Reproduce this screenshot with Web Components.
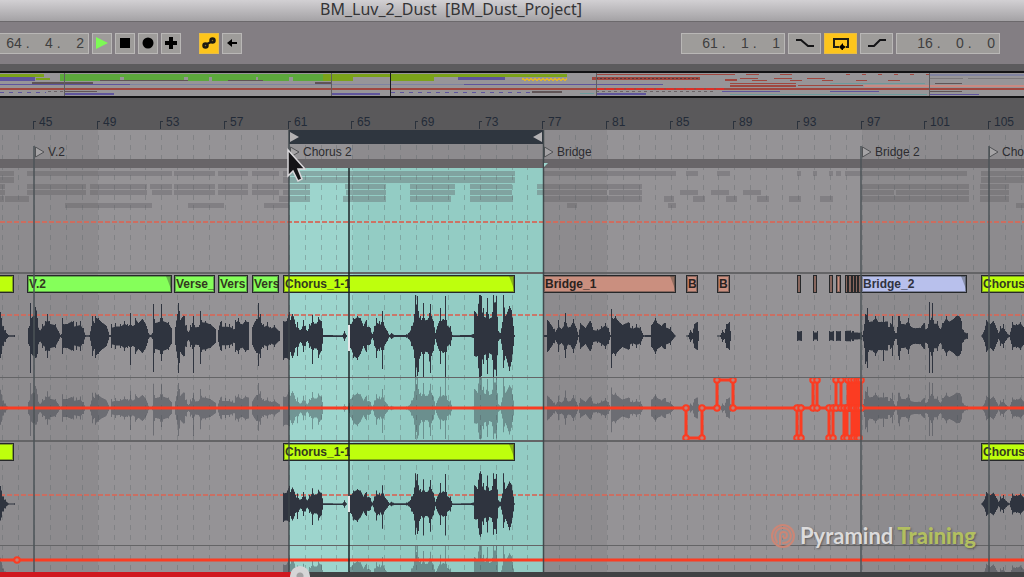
<!DOCTYPE html>
<html lang="en">
<head>
<meta charset="utf-8">
<title>BM_Luv_2_Dust</title>
<style>
  html, body {
    margin: 0;
    height: 100%;
    overflow: hidden;
    background: #5a595b;
  }
  body {
    font-family: "Liberation Sans", Arial, sans-serif;
    color: #2e3034;
  }
</style>
</head>
<body>
<daw-window>
  <title-bar slot="title">BM_Luv_2_Dust  [BM_Dust_Project]</title-bar>
  <transport-bar slot="transport"></transport-bar>
  <song-overview slot="overview"></song-overview>
  <bar-ruler slot="ruler"></bar-ruler>
  <arrange-view slot="arrange">
    <song-locator slot="locators" x="34">V.2</song-locator>
    <song-locator slot="locators" x="289">Chorus 2</song-locator>
    <song-locator slot="locators" x="543">Bridge</song-locator>
    <song-locator slot="locators" x="861">Bridge 2</song-locator>
    <song-locator slot="locators" x="988">Cho</song-locator>

    <midi-lane></midi-lane>
    <track-lane wave="full" level="22">
      <audio-clip x="-40" width="54" tone="lime"></audio-clip>
      <audio-clip x="27" width="145" tone="green">V.2</audio-clip>
      <audio-clip x="174" width="41" tone="green">Verse_</audio-clip>
      <audio-clip x="218" width="30" tone="green">Vers</audio-clip>
      <audio-clip x="252" width="27" tone="green">Vers</audio-clip>
      <audio-clip x="283" width="232" tone="lime" split="66">Chorus_1-1</audio-clip>
      <audio-clip x="543" width="133" tone="clay">Bridge_1</audio-clip>
      <audio-clip x="686" width="12" tone="clay">B</audio-clip>
      <audio-clip x="717" width="13" tone="clay">B</audio-clip>
      <audio-clip x="797" width="4" tone="clay"></audio-clip>
      <audio-clip x="813" width="4" tone="clay"></audio-clip>
      <audio-clip x="829" width="4" tone="clay"></audio-clip>
      <audio-clip x="836" width="5" tone="clay"></audio-clip>
      <audio-clip x="845" width="3" tone="clay"></audio-clip>
      <audio-clip x="848" width="4" tone="clay"></audio-clip>
      <audio-clip x="852" width="3" tone="clay"></audio-clip>
      <audio-clip x="855" width="3" tone="clay"></audio-clip>
      <audio-clip x="858" width="4" tone="clay"></audio-clip>
      <audio-clip x="861" width="106" tone="blue">Bridge_2</audio-clip>
      <audio-clip x="981" width="232" tone="lime">Chorus_</audio-clip>
    </track-lane>
    <automation-lane wave="full" curve="mutes"></automation-lane>
    <track-lane wave="chorus" level="34" scale="0.75">
      <audio-clip x="-40" width="54" tone="lime"></audio-clip>
      <audio-clip x="283" width="232" tone="lime" split="66">Chorus_1-1</audio-clip>
      <audio-clip x="981" width="232" tone="lime">Chorus_</audio-clip>
    </track-lane>
    <automation-lane wave="chorus" curve="flat"></automation-lane>
  </arrange-view>
  <brand-mark slot="brand"></brand-mark>
  <video-progress slot="progress"></video-progress>
</daw-window>

<script>
// timeline: bar 45 sits at x = 34, 12 bars take 191px
const barX = (bar) => Math.round(34 + (bar - 45) * 191 / 12);
const lastBar = 45 + Math.floor((window.innerWidth - 34) * 12 / 191);

const STUB = '0:24/22 1:18 3:10 5:6 7:2 8:1 14:1';
const CHORUS = [
  '283:15/24 286:15/22 289:24 290:16 292:22 295:12 297:14/20 300:6 303:16 305:10 307:5 309:12 311:13 312:21/28 313:14 317:14 318:19/22 321:15 323:1 342:1 344:5 346:1',
  '348:3 350:12 353:18/22 357:20/24 360:18 363:10 366:16 367:9 370:8 372:2 374:10 376:18/22 379:15 381:14 382:25/33 383:14 387:5 389:1 391:3 394:1 405:1 408:3 411:10 414:22 415:41 417:40 418:25/36 420:20 422:18 423:33/42 424:18 428:18 430:32/37 431:20 433:15 435:3 437:10 439:15 440:28 441:15 444:16 445:40/42 446:16 450:10 452:1 470:1 473:2 474:25/20 477:20 479:41 481:40 483:28 486:24 487:38 488:22 492:24 493:41 496:40 498:5 500:3 502:14 503:41/32 505:20 509:30/35 511:26 513:10 514:1',
  '981:0 984:6 986:16 990:12 993:15 996:8 998:3 1000:10 1003:12 1006:4 1009:1 1012:14 1016:12 1020:14 1024:8'
];
const VERSE = [
  '28:8 29:10 30:33/37 31:18 34:20 35:29/22 37:18 39:6 42:12 45:15 47:22 49:15 55:12 58:5 60:1 61:2 62:18 63:12 67:12 72:14 76:14 80:15 83:8 85:1 89:1 91:10 92:20 94:13 95:20/22 98:18 101:14 106:10 109:1 110:1 111:12 115:13 120:12 124:15 127:12 129:11 130:23/29 131:11 134:11 135:18 138:13 142:17 146:10 148:3 150:1 152:3 153:32/36 154:17 160:18 161:32/25 162:18 168:14 171:8',
  '175:9 177:22 178:33/37 180:16 184:20 186:11 188:4 190:11 192:13 193:20/37 194:11 199:11 200:25/28 201:16 205:15 210:12 215:7',
  '218:6 220:14 225:13 229:12 232:10 234:7 235:16 238:18 241:12 245:16 248:14',
  '252:9 255:15 257:17 258:33/30 260:22 263:12 267:14 270:9 274:11 279:5',
  '544:1 546:1 547:16 550:12 553:7 556:6 558:16 560:8 564:14 565:23/22 566:13 569:9 573:17 576:8 578:1 580:13 585:8 590:15 592:9 597:7 601:10 605:13 608:8 610:1 611:27/32 612:18 615:20 618:15 622:11 629:13 632:10 636:12 640:9 643:1 650:1 651:11 655:18 657:13 661:10 665:13 670:9 675:0',
  '686:0 688:1 690:6 692:3 694:12 697:14 698:5', '717:0 720:1 722:6 724:3 726:12 729:14 730:5',
  '797:5 801:5', '813:5 817:5', '829:5 833:5', '836:5 840:5', '845:5 852:5', '853:5 861:4',
  '862:1 864:12 865:22/28 867:28/32 868:16 873:16 875:20 878:14 882:14 883:20/25 884:14 890:13 892:20 894:5 896:3 898:20 899:20/24 900:15 906:13 908:18 910:10 914:8 920:8 924:13 926:7 927:8 928:12 929:34/37 930:16 932:33/37 933:16 937:15 940:7 942:13 946:20 948:15 953:17 956:20 960:18 963:6 967:3'
];
const WAVES = {
  full: [STUB, ...VERSE, ...CHORUS],
  chorus: [STUB, ...CHORUS]
};

// one closed shape per run of "x:up/down" peaks, roughened between them
function wavePath(runs, mid, scale, limit) {
  let d = '';
  for (const run of runs) {
    const pts = run.split(' ').map((p) => {
      const [x, v] = p.split(':');
      const [up, down] = v.split('/');
      return [+x, +up, +(down || up)];
    });
    const top = [];
    const bottom = [];
    for (let i = 0; i < pts.length; i++) {
      const [x0, u0, d0] = pts[i];
      const [x1, u1, d1] = pts[i + 1] || [x0 + 1, u0, d0];
      for (let x = x0; x < x1; x++) {
        const t = (x - x0) / (x1 - x0);
        const rough = x === x0 ? 1 : 0.68 + ((x * 7919) % 37) / 90;
        const up = Math.min(limit, Math.max(0.5, (u0 + (u1 - u0) * t) * rough * scale));
        const dn = Math.min(limit, Math.max(0.5, (d0 + (d1 - d0) * t) * rough * scale));
        top.push(`${x} ${(mid - up).toFixed(1)}H${x + 1}`);
        bottom.unshift(`${x + 1} ${(mid + dn).toFixed(1)}H${x}`);
      }
    }
    d += `M${top.join('L')}L${bottom.join('L')}Z`;
  }
  return d;
}

class DawWindow extends HTMLElement {
  constructor() {
    super();
    this.attachShadow({mode: 'open'}).innerHTML = `
      <style>
        :host {
          display: flex;
          flex-direction: column;
          height: 100vh;
          position: relative;
          overflow: hidden;
        }
        slot { display: contents; }
        slot[name="arrange"]::slotted(*) { flex: 1; min-height: 0; }
      </style>
      <slot name="title"></slot>
      <slot name="transport"></slot>
      <slot name="overview"></slot>
      <slot name="ruler"></slot>
      <slot name="arrange"></slot>
      <slot name="brand"></slot>
      <slot name="progress"></slot>
    `;
  }
}

class TitleBar extends HTMLElement {
  constructor() {
    super();
    this.attachShadow({mode: 'open'}).innerHTML = `
      <style>
        :host {
          display: block;
          flex: none;
          height: 21px;
          padding-right: 122px;
          border-bottom: 1px solid #6c696c;
          background: linear-gradient(#d2d0d3, #a4a2a5);
          color: #343436;
          text-align: center;
        }
        h1 {
          margin: 0;
          font: 16px/18px "Noto Sans", "Open Sans", sans-serif;
          white-space: pre;
        }
      </style>
      <h1><slot></slot></h1>
    `;
  }
}

class TimeField extends HTMLElement {
  connectedCallback() {
    this.attachShadow({mode: 'open'}).innerHTML = `
      <style>
        :host { display: block; width: 104px; }
        input {
          box-sizing: border-box;
          display: block;
          width: 100%;
          height: 21px;
          margin: 0;
          padding: 0 4px;
          border: 1px solid #b9b7b6;
          border-radius: 0;
          background: #9e9c9a;
          color: #3f3f40;
          font: 14px/19px "Liberation Sans", Arial, sans-serif;
          text-align: right;
        }
      </style>
      <input type="text" aria-label="${this.getAttribute('label')}">
    `;
    this.shadowRoot.querySelector('input').value = this.getAttribute('value').split('.').join(' .    ');
  }
}

class ToolButton extends HTMLElement {
  connectedCallback() {
    this.attachShadow({mode: 'open'}).innerHTML = `
      <style>
        :host { display: block; width: 20px; }
        :host([wide]) { width: 33px; }
        button {
          box-sizing: border-box;
          display: grid;
          place-items: center;
          width: 100%;
          height: 21px;
          margin: 0;
          padding: 0;
          border: 1px solid #b9b7b6;
          border-radius: 0;
          background: #9e9c9a;
          color: #141416;
        }
        :host([on]) button { background: #fdc51c; border-color: #e9bd45; }
      </style>
      <button type="button" aria-label="${this.getAttribute('label')}"><slot></slot></button>
    `;
  }
}

class TransportBar extends HTMLElement {
  constructor() {
    super();
    this.attachShadow({mode: 'open'}).innerHTML = `
      <style>
        :host {
          display: flex;
          flex: none;
          align-items: center;
          justify-content: space-between;
          height: 42px;
          padding-right: 24px;
          background: #837e83;
        }
        .group { display: flex; gap: 3px; }
        .left { margin-left: -15px; }
        .apart { margin-left: 15px; }
        svg { display: block; }
      </style>
      <div class="group left">
        <time-field label="Arrangement position" value="64.4.2"></time-field>
        <tool-button label="Play"><svg width="14" height="14"><path d="M1 1L13 7L1 13Z" fill="#7dfa55"/></svg></tool-button>
        <tool-button label="Stop"><svg width="12" height="12"><path d="M1 1H11V11H1Z"/></svg></tool-button>
        <tool-button label="Record"><svg width="12" height="12"><circle cx="6" cy="6" r="5.5"/></svg></tool-button>
        <tool-button label="Overdub"><svg width="12" height="12"><path d="M4 0H8V4H12V8H8V12H4V8H0V4H4Z"/></svg></tool-button>
        <tool-button class="apart" label="Automation arm" on><svg width="14" height="12"><path d="M3 8L11 4" stroke="#1c1a12" stroke-width="2"/><circle cx="3.500" cy="8.500" r="2" fill="#8d7325" stroke="#1c1a12" stroke-width="2.500"/><circle cx="10.500" cy="3.500" r="2" fill="#8d7325" stroke="#1c1a12" stroke-width="2.500"/></svg></tool-button>
        <tool-button label="Back to arrangement"><svg width="12" height="10"><path d="M1 5L6 1V4H11V6H6V9Z"/></svg></tool-button>
      </div>
      <div class="group">
        <time-field label="Loop start" value="61.1.1"></time-field>
        <tool-button wide label="Punch in"><svg width="20" height="10" fill="none" stroke="currentColor" stroke-width="2"><path d="M1 2H6L13 8H19"/></svg></tool-button>
        <tool-button wide on label="Loop"><svg width="18" height="14"><path d="M7 11H2V3H16V11H14" fill="none" stroke="#1f1d14" stroke-width="2"/><path d="M11 7V15L7 11ZM11 9L14 11L11 13Z"/></svg></tool-button>
        <tool-button wide label="Punch out"><svg width="20" height="10" fill="none" stroke="currentColor" stroke-width="2"><path d="M1 8H7L13 2H19"/></svg></tool-button>
        <time-field label="Loop length" value="16.0.0"></time-field>
      </div>
    `;
  }
}

class SongOverview extends HTMLElement {
  constructor() {
    super();
    // x, y, width, height grouped by colour
    const blocks = {
      '#5ca83c': [[60, 1, 265, 3], [60, 4, 60, 4], [124, 4, 60, 4], [188, 4, 21, 4], [212, 4, 44, 4], [258, 4, 31, 4], [293, 4, 30, 4]],
      '#7ba21a': [[0, 1, 44, 3], [36, 5, 14, 2], [323, 1, 30, 7], [353, 1, 214, 3], [391, 4, 43, 4]],
      '#5f559c': [[0, 4, 35, 4], [0, 11, 130, 1], [65, 20, 49, 2], [331, 20, 49, 2], [458, 4, 47, 3], [464, 11, 199, 1], [596, 20, 50, 2], [722, 18, 58, 1], [830, 18, 49, 1], [930, 21, 49, 1]],
      '#605456': [[32, 9, 61, 2], [100, 7, 88, 1], [228, 7, 35, 1], [315, 9, 16, 2], [65, 18, 32, 1], [532, 18, 30, 2], [935, 10, 27, 1], [930, 18, 32, 1]],
      '#a0473f': [[0, 15, 1024, 2], [596, 1, 139, 1], [592, 4, 108, 3], [746, 1, 13, 1], [780, 1, 12, 1], [725, 6, 12, 2], [740, 5, 18, 1], [752, 7, 15, 1], [774, 5, 18, 1], [790, 7, 12, 1], [807, 5, 18, 1], [822, 7, 11, 1], [856, 7, 11, 1], [888, 7, 12, 1], [730, 10, 66, 1], [730, 12, 66, 2], [798, 12, 65, 1]],
      '#c98a82': [[864, 12, 160, 2]],
      '#6d9a9b': [[830, 10, 95, 1], [730, 21, 197, 1], [580, 20, 14, 1]],
      '#8083a0': [[130, 11, 334, 1], [930, 1, 94, 2]],
      '#7b797c': [[930, 5, 33, 1], [968, 5, 56, 1]]
    };
    const rects = Object.entries(blocks).map(([fill, list]) =>
      `<g fill="${fill}">${list.map(([x, y, w, h]) => `<rect x="${x}" y="${y}" width="${w}" height="${h}"/>`).join('')}</g>`
    ).join('');
    this.attachShadow({mode: 'open'}).innerHTML = `
      <style>
        :host {
          display: block;
          flex: none;
          height: 25px;
          padding-top: 7px;
          border-bottom: 2px solid #121214;
          background: #5c5b5d;
        }
        svg {
          display: block;
          width: 100%;
          height: 23px;
          background: #979598;
        }
        .edge { height: 2px; background: #121214; }
      </style>
      <div class="edge"></div>
      <svg viewBox="0 0 1024 23" preserveAspectRatio="none" shape-rendering="crispEdges">
        ${rects}
        <g fill="none" stroke-width="1">
          <path d="M0 19.500H46M391 19.500H532" stroke="#5f559c" stroke-dasharray="4 5"/>
          <path d="M48 18.500H64M596 18.500H716" stroke="#6b6366" stroke-dasharray="3 3"/>
          <path d="M846 1.500H930" stroke="#a0473f" stroke-dasharray="4 12"/>
          <path d="M522 5.500H567M524 6.500H567" stroke="#e0b52e" stroke-dasharray="2 2" stroke-width="2"/>
          <path d="M596 5.500H700" stroke="#57393a" stroke-dasharray="2 2"/>
          <path d="M596 15.500H725" stroke="#dc2f28" stroke-dasharray="8 2" stroke-width="2"/>
          <path d="M64.500 0V23M331.500 0V23M596.500 0V23M929.500 0V23" stroke="#605e61"/>
          <path d="M390.500 0V23" stroke="#1a1a1c"/>
        </g>
      </svg>
    `;
  }
}

class BarRuler extends HTMLElement {
  constructor() {
    super();
    let marks = '';
    for (let bar = 45; bar <= lastBar; bar += 4) {
      marks += `<span style="left: ${barX(bar) - 1}px">${bar}</span>`;
    }
    this.attachShadow({mode: 'open'}).innerHTML = `
      <style>
        :host {
          display: block;
          position: relative;
          flex: none;
          height: 32px;
          overflow: hidden;
          background: #5a595b;
          font-size: 12px;
          line-height: 14px;
          color: #232b38;
        }
        span {
          position: absolute;
          bottom: 1px;
          padding-left: 6px;
        }
        span::before {
          content: "";
          position: absolute;
          left: 0;
          bottom: 0;
          width: 2px;
          height: 7px;
          border: solid #2b323c;
          border-width: 1px 0 0 1px;
        }
      </style>
      ${marks}
    `;
  }
}

class SongLocator extends HTMLElement {
  connectedCallback() {
    this.attachShadow({mode: 'open'}).innerHTML = `
      <style>
        :host {
          display: flex;
          align-items: center;
          gap: 3px;
          position: absolute;
          left: ${this.getAttribute('x')}px;
          top: 15px;
          height: 14px;
          font-size: 12px;
          line-height: 14px;
          color: #2c2c30;
          white-space: nowrap;
        }
      </style>
      <svg width="11" height="14"><path d="M1.500 2L10 7L1.500 12Z" fill="#a5a3a5" stroke="#525356"/></svg>
      <slot></slot>
    `;
  }
}

class ArrangeView extends HTMLElement {
  constructor() {
    super();
    let grid = '';
    let shade = '';
    for (let bar = 43; bar <= lastBar; bar++) {
      grid += `M${barX(bar)}.5 5V900`;
    }
    for (let bar = 33; bar <= lastBar; bar += 32) {
      shade += `M${barX(bar)} 0H${barX(bar + 16)}V900H${barX(bar)}Z`;
    }
    this.attachShadow({mode: 'open'}).innerHTML = `
      <style>
        :host {
          display: block;
          position: relative;
          overflow: hidden;
          background: #959396;
        }
        .back, .front {
          position: absolute;
          inset: 0;
          width: 100%;
          height: 100%;
        }
        .front { pointer-events: none; }
        .scrub {
          position: relative;
          height: 29px;
        }
        .loop {
          position: absolute;
          left: 289px;
          top: 0;
          display: flex;
          justify-content: space-between;
          align-items: center;
          width: 254px;
          height: 14px;
          background: #2f363f;
        }
        .strip {
          position: relative;
          height: 9px;
          background: #686568;
        }
        .tracks { position: relative; }
      </style>
      <svg class="back">
        <path d="${shade}" fill="#8d8b8e"/>
        <path d="M289 38H353V900H289Z" fill="#9dd5cd"/>
        <path d="M353 38H543V900H353Z" fill="#93ccc4"/>
        <path d="${grid}" stroke="#5c6468" stroke-opacity=".35" stroke-dasharray="5 5"/>
      </svg>
      <div class="scrub">
        <div class="loop">
          <svg width="10" height="14"><path d="M1 2L10 7L1 12Z" fill="#b3b1b3"/></svg>
          <svg width="10" height="14"><path d="M9 2L0 7L9 12Z" fill="#b3b1b3"/></svg>
        </div>
        <slot name="locators"></slot>
      </div>
      <div class="strip"></div>
      <div class="tracks"><slot></slot></div>
      <svg class="front">
        <path d="M34 16V900M861 16V900M989 16V900" stroke="#4c5357" stroke-width="2" stroke-opacity=".75"/>
        <path d="M289 0V900M543.500 0V900" stroke="#3b4447" stroke-width="1.500" stroke-opacity=".9"/>
        <path d="M349 38V900" stroke="#1d2326" stroke-width="1.500"/>
        <path d="M349 195V221M349 366V382" stroke="#e8e6e8" stroke-width="2"/>
        <path d="M544 33H548L544 37Z" fill="#9dd5cd"/>
        <path d="M288 20V46L293 41L298 51L302 49L298 39H305Z" fill="#141316" stroke="#d9d7da" stroke-width="1.500"/>
      </svg>
    `;
  }
}

class MidiLane extends HTMLElement {
  constructor() {
    super();
    const rows = [
      [3, 5, [0, 14], [27, 172], [174, 215], [218, 248], [252, 279], [283, 515], [543, 676], [686, 698], [717, 730], [797, 801], [813, 817], [829, 833], [836, 841], [845, 967], [981, 1024]],
      [9, 6, [0, 14], [283, 515], [981, 1024]],
      [16, 5, [0, 5], [27, 86], [90, 147], [150, 172], [174, 215], [218, 248], [252, 310], [345, 386], [410, 455], [470, 512], [537, 642], [861, 969], [980, 1009]],
      [22, 5, [0, 5], [27, 86], [90, 147], [152, 172], [174, 215], [218, 248], [252, 279], [283, 310], [346, 386], [410, 455], [470, 512], [537, 607], [609, 642], [680, 698], [711, 729], [743, 761], [861, 894], [896, 969], [980, 1009]],
      [28, 6, [0, 4], [5, 29], [279, 310], [343, 386], [410, 451], [470, 513], [543, 642], [664, 674], [693, 705], [726, 737], [757, 769], [789, 801], [820, 833], [861, 969], [980, 1009]],
      [35, 5, [65, 152], [188, 224], [264, 289], [567, 577], [668, 676], [1016, 1024]]
    ];
    const notes = rows.map(([y, h, ...spans]) =>
      spans.map(([a, b]) => `<rect x="${a}" y="${y}" width="${b - a}" height="${h}"/>`).join('')
    ).join('');
    this.attachShadow({mode: 'open'}).innerHTML = `
      <style>
        :host {
          display: block;
          height: 104px;
          border-bottom: 2px solid #646466;
        }
        svg { display: block; width: 100%; height: 100%; }
      </style>
      <svg>
        <g fill="#5d5c60" fill-opacity=".36">${notes}</g>
        <path d="M0 54H3000" stroke="#d4695a" stroke-width="2" stroke-dasharray="5 2" stroke-opacity=".9"/>
      </svg>
    `;
  }
}

class AudioClip extends HTMLElement {
  connectedCallback() {
    const width = +this.getAttribute('width');
    const split = this.getAttribute('split') || width - 2;
    this.attachShadow({mode: 'open'}).innerHTML = `
      <style>
        :host {
          box-sizing: border-box;
          display: block;
          position: absolute;
          left: ${this.getAttribute('x')}px;
          top: 0;
          width: ${width}px;
          height: 18px;
          border: 1px solid #26282a;
          box-shadow: inset 0 0 0 1px rgba(38, 40, 42, .4);
          overflow: hidden;
          font-size: 12px;
          font-weight: bold;
          line-height: 17px;
          color: #33391f;
        }
        :host([tone="lime"]) { background: #beff0d; }
        :host([tone="green"]) { background: #85ff5a; }
        :host([tone="clay"]) { background: #ca8f7f; color: #2b2220; }
        :host([tone="blue"]) { background: #b8c0ec; color: #30323f; }
        .name {
          width: ${split}px;
          padding-left: 1px;
          box-sizing: border-box;
          overflow: hidden;
          white-space: nowrap;
        }
        .fade {
          position: absolute;
          right: 0;
          top: 0;
        }
      </style>
      <div class="name"><slot></slot></div>
      ${width > 100 ? '<svg class="fade" width="5" height="16"><path d="M0 0L5 13V0Z" fill="#2c3028" fill-opacity=".35"/></svg>' : ''}
    `;
  }
}

class TrackLane extends HTMLElement {
  connectedCallback() {
    const scale = +(this.getAttribute('scale') || 1);
    const level = this.getAttribute('level');
    this.attachShadow({mode: 'open'}).innerHTML = `
      <style>
        :host {
          display: block;
          padding-top: 1px;
          border-bottom: 1px solid #646466;
        }
        .clips { position: relative; height: 18px; }
        svg { display: block; width: 100%; height: 84px; }
      </style>
      <div class="clips"><slot></slot></div>
      <svg>
        <path d="M0 ${level}H3000" stroke="#d4695a" stroke-width="2" stroke-dasharray="5 2" stroke-opacity=".85"/>
        <path d="${wavePath(WAVES[this.getAttribute('wave')], 43, scale, 41)}" fill="#2f343f"/>
        <path d="M323 43.500H345M387 43.500H411M452 43.500H474" stroke="#2f343f"/>
      </svg>
    `;
  }
}

class AutomationLane extends HTMLElement {
  connectedCallback() {
    let line = 'M0 14H3000';
    let nodes = [[17, 14]];
    if (this.getAttribute('curve') === 'mutes') {
      const steps = [[686, 702, 60], [717, 733, 2], [797, 801, 60], [813, 817, 2], [829, 833, 60], [836, 841, 2], [844, 847, 60], [848, 851, 2], [852, 854, 60], [854, 857, 2], [857, 859, 60], [859, 861, 2]];
      line = 'M0 30';
      nodes = [];
      for (const [a, b, y] of steps) {
        line += `H${a}V${y}H${b}V30`;
        nodes.push([a, 30], [a, y], [b, y], [b, 30]);
      }
      line += 'H3000';
    }
    this.attachShadow({mode: 'open'}).innerHTML = `
      <style>
        :host {
          display: block;
          border-bottom: 2px solid #646466;
        }
        svg { display: block; width: 100%; height: 62px; }
      </style>
      <svg>
        <path d="${wavePath(WAVES[this.getAttribute('wave')], 30, 0.76, 31)}" fill="#2f343f" fill-opacity=".4"/>
        <g stroke="#fb3c22">
          <path d="${line}" fill="none" stroke-width="3"/>
          ${nodes.map(([x, y]) => `<circle cx="${x}" cy="${y}" r="2.750" fill="#c08078" stroke-width="2"/>`).join('')}
        </g>
      </svg>
    `;
  }
}

class BrandMark extends HTMLElement {
  constructor() {
    super();
    this.attachShadow({mode: 'open'}).innerHTML = `
      <style>
        :host {
          display: flex;
          align-items: center;
          gap: 4px;
          position: absolute;
          right: 48px;
          bottom: 27px;
          font: bold 22px/28px Lato, "Open Sans", sans-serif;
          color: #dcdbdc;
          white-space: nowrap;
          text-shadow: 1px 1px 2px rgba(60, 60, 60, .6);
        }
        b { color: #b2bf60; }
      </style>
      <svg width="26" height="26" fill="none" stroke="#cb8676" stroke-width="2" stroke-linecap="round">
        <circle cx="13" cy="13" r="11"/>
        <path d="M10 21V12C10 8 17 8 17 12C17 16 13 16 13 13"/>
        <path d="M7 19C3 12 6 5 13 5C20 5 23 13 19 18C17 20 15 20 13 20"/>
      </svg>
      <span>Pyramind</span><b>Training</b>
    `;
  }
}

class VideoProgress extends HTMLElement {
  constructor() {
    super();
    this.attachShadow({mode: 'open'}).innerHTML = `
      <style>
        :host {
          display: block;
          position: relative;
          flex: none;
          height: 5px;
          background: linear-gradient(90deg, #d0181f 29%, #414244 29%);
        }
        input {
          -webkit-appearance: none;
          appearance: none;
          position: absolute;
          left: 0;
          top: -6px;
          width: 100%;
          height: 20px;
          margin: 0;
          background: none;
        }
        input::-webkit-slider-thumb {
          -webkit-appearance: none;
          width: 20px;
          height: 20px;
          border-radius: 50%;
          background: radial-gradient(circle, #a3a2a3 3px, #d6d5d6 4px);
        }
      </style>
      <input type="range" min="0" max="1000" value="289" aria-label="Playback position">
    `;
  }
}

customElements.define('daw-window', DawWindow);
customElements.define('title-bar', TitleBar);
customElements.define('time-field', TimeField);
customElements.define('tool-button', ToolButton);
customElements.define('transport-bar', TransportBar);
customElements.define('song-overview', SongOverview);
customElements.define('bar-ruler', BarRuler);
customElements.define('song-locator', SongLocator);
customElements.define('arrange-view', ArrangeView);
customElements.define('midi-lane', MidiLane);
customElements.define('audio-clip', AudioClip);
customElements.define('track-lane', TrackLane);
customElements.define('automation-lane', AutomationLane);
customElements.define('brand-mark', BrandMark);
customElements.define('video-progress', VideoProgress);
</script>
</body>
</html>
